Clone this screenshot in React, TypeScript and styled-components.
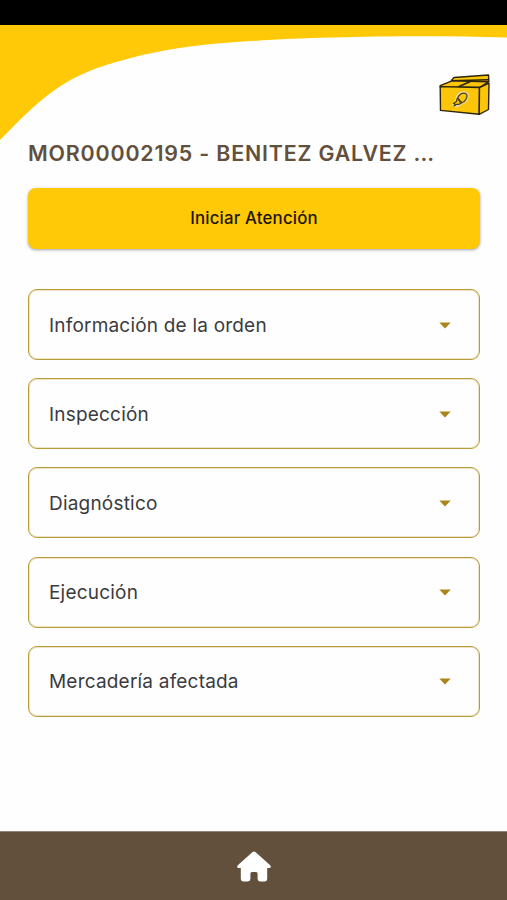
import React from "react";
import styled, { createGlobalStyle } from "styled-components";

const GlobalStyle = createGlobalStyle`
  * { box-sizing: border-box; }
  html, body { margin: 0; padding: 0; background: #fefefe; }
  body { font-family: Inter, "Liberation Sans", sans-serif; }
  button { font-family: inherit; cursor: pointer; }
`;

const Screen = styled.div`
  width: 100%;
  height: 900px;
  display: flex;
  flex-direction: column;
  overflow: hidden;
  background: #fefefe;
`;

const StatusBar = styled.div`
  flex: none;
  height: 25px;
  background: #000;
`;

const Header = styled.header`
  position: relative;
  flex: none;
  height: 115px;
  display: flex;
  justify-content: flex-end;
  align-items: flex-start;
  padding: 48px 16px 0 0;
`;

const Wave = styled.svg`
  position: absolute;
  inset: 0;
  width: 100%;
  height: 116px;
`;

const BoxLogo = styled.svg`
  position: relative;
  width: 53px;
  height: 44px;
`;

const Content = styled.main`
  flex: 1;
  display: flex;
  flex-direction: column;
  padding: 0 27px 0 28px;
`;

const Title = styled.h1`
  margin: 0;
  height: 26px;
  line-height: 26px;
  font-size: 21.4px;
  font-weight: 600;
  letter-spacing: 0.82px;
  color: #63503c;
  white-space: nowrap;
`;

const Ellipsis = styled.span`
  letter-spacing: 0;
`;

const StartButton = styled.button`
  flex: none;
  height: 61px;
  margin: 22px 0 40px;
  padding: 0 0 2px;
  border: 0;
  border-radius: 8px;
  background: #ffc907;
  box-shadow: 0 1px 3px rgba(70, 70, 70, 0.5);
  color: #1b1505;
  font-size: 16.8px;
  font-weight: 500;
  letter-spacing: 0.2px;
`;

const Sections = styled.div`
  display: flex;
  flex-direction: column;
  gap: 18.2px;
`;

const SectionRow = styled.button`
  height: 71px;
  display: flex;
  align-items: center;
  justify-content: space-between;
  padding: 1px 28px 0 20px;
  border: 1px solid #b99b37;
  box-shadow: inset 0 0 0 1px rgba(185, 155, 55, 0.25);
  border-radius: 9px;
  background: #fefefe;
  color: #3b3b3e;
  font-size: 19px;
  font-weight: 400;
  letter-spacing: 0.2px;
`;

const Caret = styled.svg`
  width: 12px;
  height: 7px;
`;

const BottomBar = styled.nav`
  flex: none;
  height: 69px;
  display: flex;
  justify-content: center;
  align-items: center;
  border-top: 1px solid #8f8478;
  background: #62503d;
`;

const HomeIcon = styled.svg`
  width: 34px;
  height: 31px;
`;

const sections = [
  "Información de la orden",
  "Inspección",
  "Diagnóstico",
  "Ejecución",
  "Mercadería afectada",
];

export default function App() {
  return (
    <>
      <GlobalStyle />
      <Screen>
        <StatusBar />
        <Header>
          <Wave viewBox="0 0 507 116" preserveAspectRatio="none" aria-hidden="true">
            <path
              d="M0 0H507V12.5C410 9.8 300 12 230 17.6C196 20.3 163 24.5 130 33.3C108 39 86 46 67 57C40 73 20 95 0 115Z"
              fill="#ffc907"
            />
          </Wave>
          <BoxLogo viewBox="0 0 53 44" role="img" aria-label="Caja">
            <g stroke="#2c240b" strokeWidth="1.4" strokeLinejoin="round" strokeLinecap="round" fill="#fbc609">
              <path d="M13.5 7.5L16 4.5L50.5 2L50.8 8.5L41 12L13 10Z" />
              <path d="M14 7.8L50.5 6.8" fill="none" />
              <path d="M2.2 12.6L14 7.8L50.5 8.8L41.5 14.5L2.2 14Z" />
              <path d="M2.2 13.6L41.5 14.5L41.2 41.3L2.5 37.4Z" />
              <path d="M41.5 14.5L51 10.2L50.5 36.5L41.2 41.3Z" />
              <path d="M21.5 13.3L33 8.2" fill="none" strokeWidth="1.7" />
            </g>
            <g fill="#fbc609" stroke="#e9dfb5" strokeWidth="2.6" strokeLinejoin="round">
              <path d="M19 25C19.5 21 24 18.8 27.5 20C31.5 22 28.5 28.5 23.5 30.2L19 33L15.5 32L18.5 28.5Z" />
            </g>
            <g fill="#fbc609" stroke="#4a3d13" strokeWidth="1.2" strokeLinejoin="round" strokeLinecap="round">
              <path d="M19.8 25.5C20 22 24 19.4 27.3 20.3C31 22.2 28 28.2 23.8 29.7Z" />
              <path d="M19.8 25C18 26.5 19 27.4 18.5 28.6L15.5 30.5L17 31L16 33L19 31.3C21.5 32 22 30.8 24 29.8C22 29 20.5 27.5 19.8 25Z" />
              <path d="M21 27L22 29.3" />
            </g>
          </BoxLogo>
        </Header>
        <Content>
          <Title>
            MOR00002195 - BENITEZ GALVEZ <Ellipsis>...</Ellipsis>
          </Title>
          <StartButton type="button">Iniciar Atención</StartButton>
          <Sections>
            {sections.map((label) => (
              <SectionRow key={label} type="button">
                {label}
                <Caret viewBox="0 0 12 7" aria-hidden="true">
                  <path d="M0.3 0.4H11.7L6 6.6Z" fill="#ab8417" />
                </Caret>
              </SectionRow>
            ))}
          </Sections>
        </Content>
        <BottomBar>
          <HomeIcon viewBox="0 0 34 31" role="img" aria-label="Inicio">
            <path
              d="M15.6 1.1Q17 0 18.4 1.1L33.2 14.2Q34.3 15.3 33.5 16.4Q33 17 31.8 17H30.2V28Q30.2 30.4 27.8 30.4H23Q20.6 30.4 20.6 28V22.6Q20.6 21 19 21H15Q13.4 21 13.4 22.6V28Q13.4 30.4 11 30.4H6.2Q3.8 30.4 3.8 28V17H2.2Q1 17 0.5 16.4Q-0.3 15.3 0.8 14.2Z"
              fill="#fff"
            />
          </HomeIcon>
        </BottomBar>
      </Screen>
    </>
  );
}
